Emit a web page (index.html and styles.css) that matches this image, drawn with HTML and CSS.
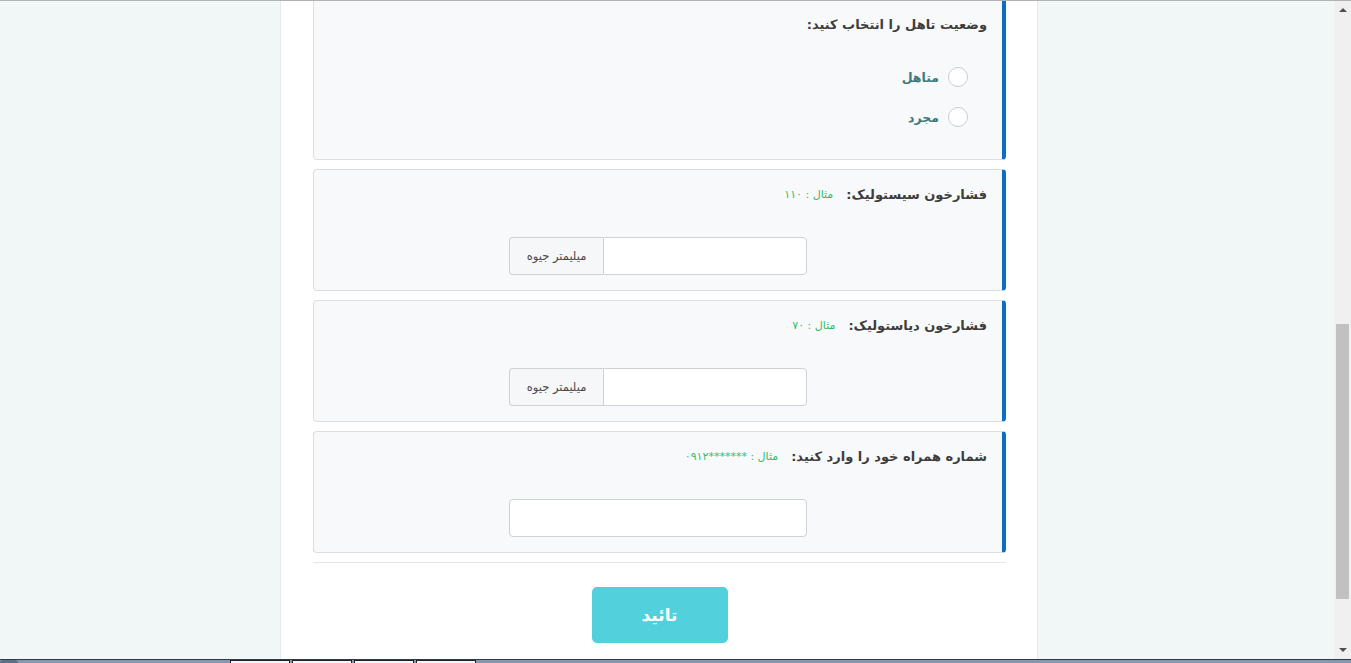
FILE: index.html
```html
<!DOCTYPE html>
<html lang="fa">
<head>
<meta charset="utf-8">
<title>فرم</title>
<link rel="stylesheet" href="styles.css">
</head>
<body>
<div class="topline"></div>
<div class="screen">
  <div class="viewport">
    <main class="page" dir="rtl">
      <section class="card card-first">
        <div class="q-head"><span class="q-title">وضعیت تاهل را انتخاب کنید:</span></div>
        <div class="radios">
          <label class="radio"><span class="circle"></span><span class="radio-label">متاهل</span></label>
          <label class="radio"><span class="circle"></span><span class="radio-label">مجرد</span></label>
        </div>
      </section>

      <section class="card">
        <div class="q-head"><span class="q-title">فشارخون سیستولیک:</span><span class="q-hint">مثال : ۱۱۰</span></div>
        <div class="input-group">
          <span class="field"></span>
          <span class="addon">میلیمتر جیوه</span>
        </div>
      </section>

      <section class="card">
        <div class="q-head"><span class="q-title">فشارخون دیاستولیک:</span><span class="q-hint">مثال : ۷۰</span></div>
        <div class="input-group">
          <span class="field"></span>
          <span class="addon">میلیمتر جیوه</span>
        </div>
      </section>

      <section class="card">
        <div class="q-head"><span class="q-title">شماره همراه خود را وارد کنید:</span><span class="q-hint">مثال : <span class="ltr">۰۹۱۲*******</span></span></div>
        <div class="input-group">
          <span class="field field-solo"></span>
        </div>
      </section>

      <hr class="divider">
      <div class="actions"><button class="btn-submit" type="button">تائید</button></div>
    </main>
  </div>
  <div class="scrollbar">
    <span class="arrow arrow-up"></span>
    <div class="track"><div class="thumb"></div></div>
    <span class="arrow arrow-down"></span>
  </div>
</div>
<div class="taskbar">
  <span class="orb"></span>
  <span class="tab"></span>
  <span class="tab"></span>
  <span class="tab"></span>
  <span class="tab"></span>
</div>
</body>
</html>
```

FILE: styles.css
```css
html, body {
  margin: 0;
  padding: 0;
}
body {
  width: 1351px;
  height: 663px;
  overflow: hidden;
  display: flex;
  flex-direction: column;
  background: #f0f6f6;
  font-family: "DejaVu Sans", "Noto Sans", sans-serif;
}
.topline {
  height: 1px;
  background: #b2b2b2;
  flex: none;
}
.screen {
  height: 658px;
  display: flex;
  flex: none;
}
.viewport {
  flex: 1;
  background: #f1f6f7;
  overflow: hidden;
}
.page {
  margin-left: 280px;
  width: 693px;
  height: 100%;
  padding: 0 31px 0 32px;
  background: #ffffff;
  border-left: 1px solid #e7ebec;
  border-right: 1px solid #e7ebec;
  display: flex;
  flex-direction: column;
  gap: 9px;
}
.card {
  flex: none;
  background: #f8f9fb;
  border: 1px solid #dcdfe2;
  border-right: 4px solid #0b6ec2;
  border-radius: 4px;
  padding: 12px 15px 15px 15px;
  height: 93px;
}
.card-first {
  border-top: none;
  border-top-right-radius: 0;
  border-top-left-radius: 0;
  height: 126px;
  padding-top: 11px;
  padding-bottom: 21px;
}
.q-head {
  display: flex;
  align-items: center;
  gap: 13px;
  height: 24px;
}
.q-title {
  font-size: 13px;
  font-weight: bold;
  color: #3d3d3d;
}
.q-hint {
  font-size: 11px;
  color: #2fbf6a;
}
.ltr {
  unicode-bidi: isolate;
  direction: ltr;
}
.radios {
  margin-top: 21px;
  padding-right: 19px;
  display: flex;
  flex-direction: column;
}
.radio {
  height: 40px;
  display: flex;
  align-items: center;
  gap: 9px;
}
.circle {
  width: 18px;
  height: 18px;
  border: 1px solid #c9cdd0;
  border-radius: 50%;
  background: #ffffff;
}
.radio-label {
  font-size: 12.5px;
  font-weight: bold;
  color: #3e7b7e;
}
.input-group {
  margin: 31px auto 0;
  width: 298px;
  height: 38px;
  display: flex;
}
.field {
  flex: 1;
  background: #ffffff;
  border: 1px solid #cdd2d7;
  border-radius: 0 4px 4px 0;
}
.field-solo {
  border-radius: 4px;
}
.addon {
  width: 93px;
  flex: none;
  display: flex;
  align-items: center;
  justify-content: center;
  background: #f6f7f8;
  border: 1px solid #cdd2d7;
  border-right: none;
  border-radius: 4px 0 0 4px;
  font-size: 11.5px;
  color: #4a4a4a;
}
.divider {
  flex: none;
  margin: 0;
  border: none;
  border-top: 1px solid #e6e6e6;
  height: 0;
}
.actions {
  display: flex;
  justify-content: center;
  padding-top: 15px;
}
.btn-submit {
  width: 136px;
  height: 56px;
  border: none;
  border-radius: 5px;
  background: #52d1dc;
  color: #ffffff;
  font-family: "DejaVu Sans", sans-serif;
  font-size: 17px;
  font-weight: bold;
}
.scrollbar {
  width: 17px;
  flex: none;
  background: #f0f0f0;
  display: flex;
  flex-direction: column;
  align-items: center;
}
.arrow {
  width: 0;
  height: 0;
  border-left: 4px solid transparent;
  border-right: 4px solid transparent;
  flex: none;
}
.arrow-up {
  margin-top: 7px;
  border-bottom: 4px solid #505050;
}
.arrow-down {
  margin-bottom: 7px;
  border-top: 4px solid #505050;
}
.track {
  flex: 1;
  width: 100%;
  display: flex;
  justify-content: center;
  padding-top: 312px;
  padding-bottom: 45px;
  box-sizing: border-box;
}
.thumb {
  width: 13px;
  height: 275px;
  background: #c1c1c1;
}
.taskbar {
  height: 3px;
  flex: none;
  border-top: 1px solid #2e3c4f;
  background: #8797ad;
  display: flex;
  align-items: flex-start;
}
.orb {
  width: 18px;
  height: 3px;
  background: #5d7088;
  border-radius: 9px 9px 0 0;
}
.tab {
  width: 58px;
  height: 3px;
  background: #f4f6f8;
  border: 1px solid #222;
  border-bottom: none;
  margin-left: 2px;
}
.orb + .tab {
  margin-left: 212px;
}
```
